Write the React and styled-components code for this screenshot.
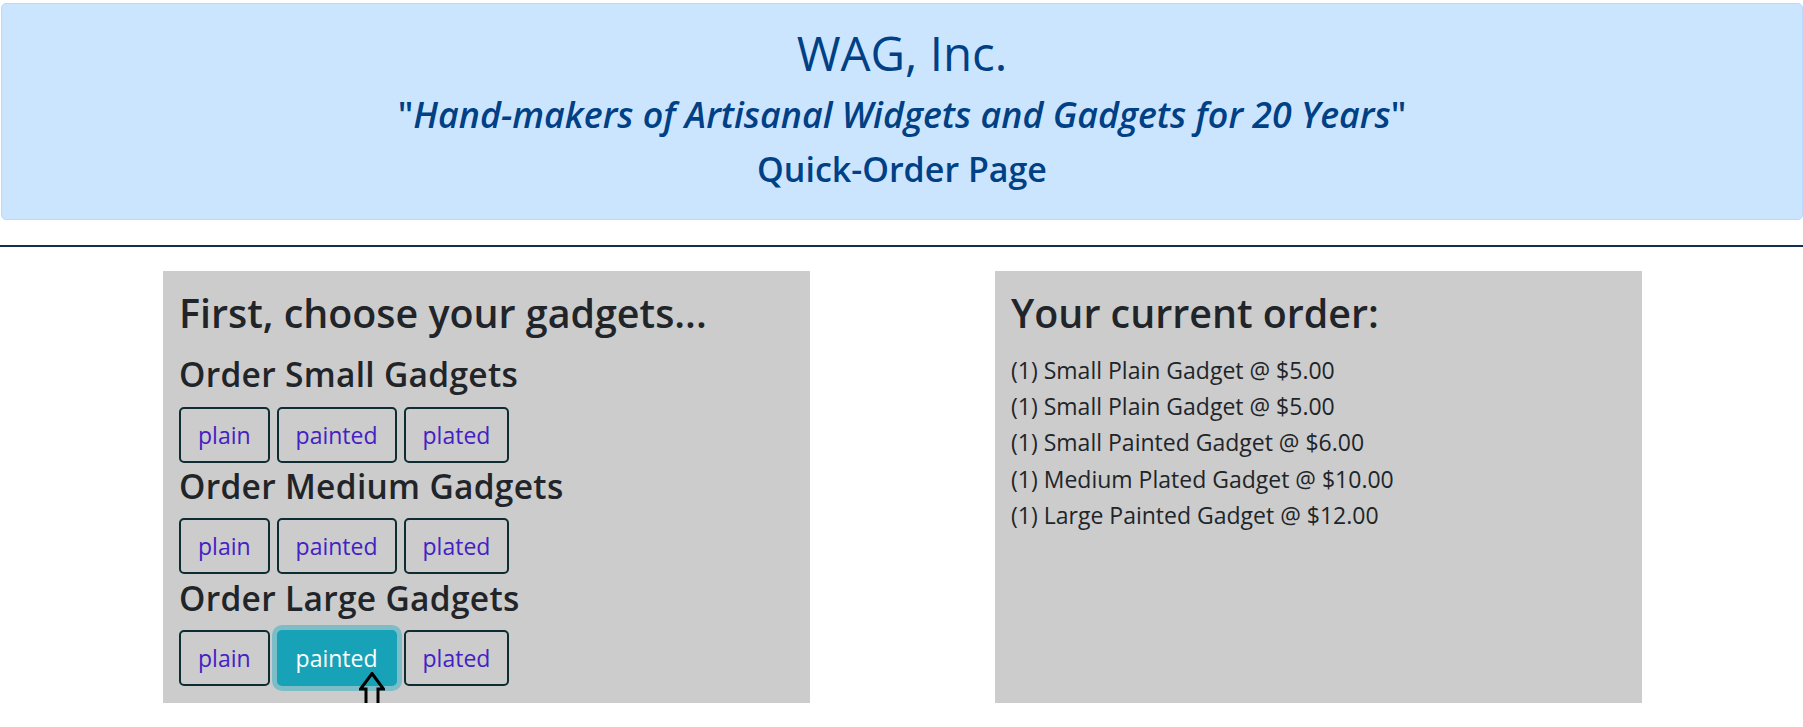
import React, { useState } from 'react'
import styled, { createGlobalStyle } from 'styled-components'

const GlobalStyle = createGlobalStyle`
  html, body {
    margin: 0;
    padding: 0;
    background: #fff;
  }
  body {
    font-family: "Open Sans", "Noto Sans", Arial, sans-serif;
    color: #212529;
  }
  * { box-sizing: border-box; }
`

const sizes = ['Small', 'Medium', 'Large']
const finishes = [
  { key: 'plain', label: 'plain', price: [5, 8, 11] },
  { key: 'painted', label: 'painted', price: [6, 9, 12] },
  { key: 'plated', label: 'plated', price: [7, 10, 13] },
]

const initialOrder = [
  { qty: 1, size: 'Small', finish: 'Plain', price: 5 },
  { qty: 1, size: 'Small', finish: 'Plain', price: 5 },
  { qty: 1, size: 'Small', finish: 'Painted', price: 6 },
  { qty: 1, size: 'Medium', finish: 'Plated', price: 10 },
  { qty: 1, size: 'Large', finish: 'Painted', price: 12 },
]

function CursorArrow() {
  return (
    <Cursor width="26" height="36" viewBox="0 0 26 36">
      <polygon
        points="13,1.5 24.5,17 19,17 19,33.5 7,33.5 7,17 1.5,17"
        fill="none"
        stroke="#000"
        strokeWidth="3"
        strokeLinejoin="miter"
      />
    </Cursor>
  )
}

export default function App() {
  const [order, setOrder] = useState(initialOrder)
  const [active] = useState('Large-painted')

  const addGadget = (size, finish, idx) => {
    const label = finish.label.charAt(0).toUpperCase() + finish.label.slice(1)
    setOrder([...order, { qty: 1, size, finish: label, price: finish.price[idx] }])
  }

  return (
    <Page>
      <GlobalStyle />
      <Banner>
        <Title>WAG, Inc.</Title>
        <Tagline>"<em>Hand-makers of Artisanal Widgets and Gadgets for 20 Years</em>"</Tagline>
        <Subtitle>Quick-Order Page</Subtitle>
      </Banner>
      <Rule />
      <Columns>
        <Panel>
          <PanelTitle>First, choose your gadgets...</PanelTitle>
          {sizes.map((size, idx) => (
            <Group key={size}>
              <GroupTitle>Order {size} Gadgets</GroupTitle>
              <ButtonRow>
                {finishes.map((f) => (
                  <GadgetButton
                    key={f.key}
                    $active={active === `${size}-${f.key}`}
                    onClick={() => addGadget(size, f, idx)}
                  >
                    {f.label}
                    {active === `${size}-${f.key}` && <CursorArrow />}
                  </GadgetButton>
                ))}
              </ButtonRow>
            </Group>
          ))}
        </Panel>
        <Panel>
          <OrderTitle>Your current order:</OrderTitle>
          <OrderList>
            {order.map((item, i) => (
              <OrderItem key={i}>
                ({item.qty}) {item.size} {item.finish} Gadget @ ${item.price.toFixed(2)}
              </OrderItem>
            ))}
          </OrderList>
        </Panel>
      </Columns>
    </Page>
  )
}

const Page = styled.div`
  width: 1803px;
  padding-top: 3px;
`

const Banner = styled.header`
  margin-left: 1px;
  height: 217px;
  padding-top: 20.5px;
  background: #cce5ff;
  border: 1px solid #b8daff;
  border-radius: 5px;
  color: #004085;
  text-align: center;
`

const Title = styled.h1`
  margin: 0;
  font-size: 47.5px;
  font-weight: 500;
  line-height: 56px;
`

const Tagline = styled.h3`
  margin: 11.8px 0 0;
  font-size: 35.8px;
  font-weight: 600;
  line-height: 44px;
  em {
    font-style: italic;
  }
`

const Subtitle = styled.h3`
  margin: 11px 0 0;
  font-size: 34px;
  font-weight: 600;
  line-height: 44px;
`

const Rule = styled.hr`
  margin: 25px 0 0;
  height: 2px;
  border: 0;
  background: #15304c;
`

const Columns = styled.div`
  display: flex;
  justify-content: center;
  gap: 185px;
  padding-left: 2px;
  margin-top: 24px;
`

const Panel = styled.section`
  width: 647px;
  height: 432px;
  background: #cccccc;
  padding: 18.2px 16px;
`

const PanelTitle = styled.h2`
  margin: 0 0 19px;
  font-size: 39.4px;
  font-weight: 600;
  line-height: 48px;
`

const OrderTitle = styled(PanelTitle)`
  margin-bottom: 14.7px;
`

const Group = styled.div`
  & + & {
    margin-top: 5.3px;
  }
`

const GroupTitle = styled.h4`
  margin: 0 0 14.4px;
  font-size: 33.5px;
  font-weight: 600;
  letter-spacing: 0.3px;
  line-height: 36px;
`

const ButtonRow = styled.div`
  display: flex;
  gap: 7px;
`

const GadgetButton = styled.button`
  position: relative;
  height: 56px;
  padding: 0 17px;
  font-family: inherit;
  font-size: 23px;
  line-height: 30px;
  border-radius: 5px;
  cursor: pointer;
  color: ${(p) => (p.$active ? '#fff' : '#4321c4')};
  background: ${(p) => (p.$active ? '#17a2b8' : 'transparent')};
  border: 2px solid ${(p) => (p.$active ? '#17a2b8' : '#0d2d33')};
  box-shadow: ${(p) => (p.$active ? '0 0 0 5px rgba(58, 176, 195, 0.55)' : 'none')};
`

const Cursor = styled.svg`
  position: absolute;
  left: 80px;
  top: 40px;
  pointer-events: none;
`

const OrderList = styled.div`
  font-size: 23px;
`

const OrderItem = styled.div`
  line-height: 36.3px;
`
